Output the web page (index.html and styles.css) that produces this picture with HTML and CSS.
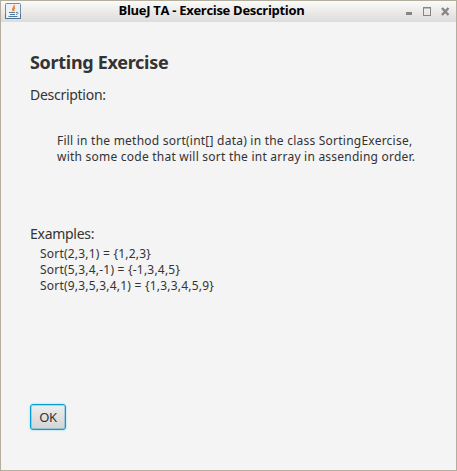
FILE: index.html
```html
<!DOCTYPE html>
<html lang="en">
<head>
<meta charset="utf-8">
<title>BlueJ TA - Exercise Description</title>
<link rel="stylesheet" href="styles.css">
</head>
<body>
<div class="window">
<header class="titlebar">
<svg class="app-icon" viewBox="0 0 16 16"><rect x=".5" y=".5" width="15" height="15" rx="1" fill="#edf1f3" stroke="#6f8ca8"/><path d="M.5 11v4.500h15V11" fill="none" stroke="#4a7096"/><path d="M9 2c1.500 2-3 3-1 6M10 4.500c-2 1-1.500 2-1 3.500" fill="none" stroke="#e8863c" stroke-width="1.500"/><path d="M4 9.500h6M5 11.500h5M3.500 13.500h9M11 9.500c3-1 2 2 0 2" fill="none" stroke="#557c9e"/></svg>
<h1 class="title">BlueJ TA - Exercise Description</h1>
<svg class="controls" viewBox="0 0 44 21"><g fill="none" stroke="#868686"><path d="M0 12.500h6" stroke-width="3"/><path d="M17 7h8M17.500 6v9M24.500 6v9M17 14.500h8" /><path d="M17 6.500h8"/><path d="M36 7l6.500 7M42.500 7l-6.500 7" stroke-width="2.500"/></g></svg>
</header>
<main class="content">
<h2 class="heading">Sorting Exercise</h2>
<p class="label">Description:</p>
<p class="description">Fill in the method sort(int[] data) in the class SortingExercise,<br>with some code that will sort the int array in assending order.</p>
<p class="label">Examples:</p>
<p class="examples">Sort(2,3,1) = {1,2,3}<br>Sort(5,3,4,-1) = {-1,3,4,5}<br>Sort(9,3,5,3,4,1) = {1,3,3,4,5,9}</p>
<button class="ok">OK</button>
</main>
</div>
</body>
</html>
```
FILE: styles.css
```css
* { box-sizing: border-box; margin: 0; padding: 0; }
body { width: 457px; height: 471px; font-family: "Noto Sans", sans-serif; color: #333; }
.window { height: 471px; border: 1px solid #b4ae9e; background: #f4f4f4; }
.titlebar { height: 21px; display: flex; align-items: center; background: linear-gradient(#fafafa, #dedcda); padding: 0 6px 0 4px; }
.app-icon { width: 16px; height: 16px; margin-top: -1px; }
.title { flex: 1; padding-right: 2px; text-align: center; font: bold 13px/19px "Open Sans", sans-serif; letter-spacing: -0.3px; color: #000; white-space: nowrap; position: relative; top: -1px; }
.controls { width: 44px; height: 21px; margin-left: 2px; }
.content { padding: 28px 29px; }
.heading { font-size: 18px; line-height: 25px; letter-spacing: -0.3px; }
.label { font-size: 14px; line-height: 19px; letter-spacing: -0.28px; margin-top: 10px; }
.description { font-size: 12px; line-height: 16px; letter-spacing: 0.23px; margin: 29px 0 0 27px; white-space: nowrap; }
.description + .label { margin-top: 59px; }
.examples { font-size: 12px; line-height: 16px; letter-spacing: 0.21px; margin: 3px 0 0 10px; }
.ok { display: block; margin-top: 110px; width: 36px; height: 26px; border: 1px solid #039ed3; border-radius: 3px; box-shadow: 0 0 2px #7fcde8, inset 0 0 0 1px rgba(3, 158, 211, .3); background: linear-gradient(#eee, #d4d4d4); font: 13px "Noto Sans", sans-serif; letter-spacing: -0.3px; color: #333; }
```
